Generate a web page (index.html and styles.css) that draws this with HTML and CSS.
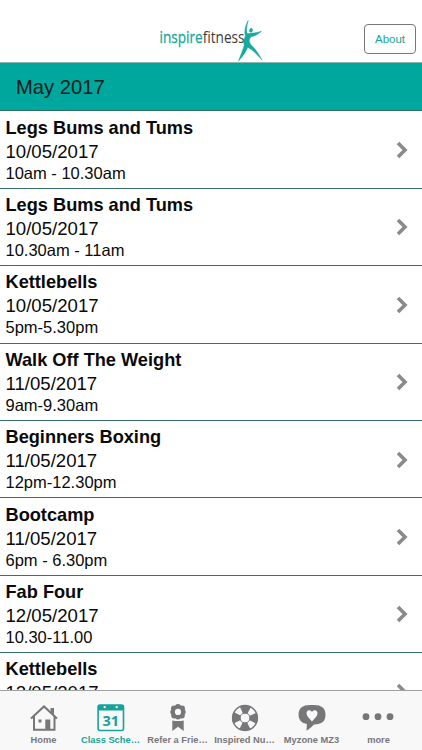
FILE: index.html
```html
<!DOCTYPE html>
<html lang="en">
<head>
    <meta charset="UTF-8">
    <meta name="viewport" content="width=device-width, initial-scale=1.0">
    <title>Inspire Fitness - Class Schedule</title>
    <link rel="stylesheet" href="styles.css">
</head>
<body>
    <header class="header">
        <svg class="logo" width="106" height="48" viewBox="0 0 106 48" role="img" aria-label="inspirefitness">
            <text class="logo-text" x="-1.5" y="27" textLength="85" lengthAdjust="spacingAndGlyphs"><tspan class="logo-inspire">inspire</tspan><tspan class="logo-fitness">fitness</tspan></text>
            <g fill="#16a99f" stroke="#16a99f" stroke-width="0.5">
                <ellipse cx="90" cy="14.3" rx="1.7" ry="2.2" stroke="none" transform="rotate(20 90 14.3)"/>
                <path d="M87.2 4.5Q84.6 13 86.2 17.8Q89 17.3 92 17Q97 16.6 100.5 15.3Q96 19.8 89.8 20.8Q86.8 24.5 89.6 28.4Q95 33 101 44Q93 34.5 86.8 31.2Q84.5 37.5 77.5 45Q81 36 83.2 29.8Q82 24 84.4 20Q82.4 13.5 87.2 4.5Z"/>
            </g>
        </svg>
        <button class="about">About</button>
    </header>

    <h1 class="month">May 2017</h1>

    <main class="classes">
        <div class="class">
            <div>
                <h2>Legs Bums and Tums</h2>
                <p class="date">10/05/2017</p>
                <p class="time">10am - 10.30am</p>
            </div>
            <svg class="arrow" viewBox="0 0 12 18"><path d="M2 2l7 7-7 7"/></svg>
        </div>
        <div class="class">
            <div>
                <h2>Legs Bums and Tums</h2>
                <p class="date">10/05/2017</p>
                <p class="time">10.30am - 11am</p>
            </div>
            <svg class="arrow" viewBox="0 0 12 18"><path d="M2 2l7 7-7 7"/></svg>
        </div>
        <div class="class">
            <div>
                <h2>Kettlebells</h2>
                <p class="date">10/05/2017</p>
                <p class="time">5pm-5.30pm</p>
            </div>
            <svg class="arrow" viewBox="0 0 12 18"><path d="M2 2l7 7-7 7"/></svg>
        </div>
        <div class="class">
            <div>
                <h2>Walk Off The Weight</h2>
                <p class="date">11/05/2017</p>
                <p class="time">9am-9.30am</p>
            </div>
            <svg class="arrow" viewBox="0 0 12 18"><path d="M2 2l7 7-7 7"/></svg>
        </div>
        <div class="class">
            <div>
                <h2>Beginners Boxing</h2>
                <p class="date">11/05/2017</p>
                <p class="time">12pm-12.30pm</p>
            </div>
            <svg class="arrow" viewBox="0 0 12 18"><path d="M2 2l7 7-7 7"/></svg>
        </div>
        <div class="class">
            <div>
                <h2>Bootcamp</h2>
                <p class="date">11/05/2017</p>
                <p class="time">6pm - 6.30pm</p>
            </div>
            <svg class="arrow" viewBox="0 0 12 18"><path d="M2 2l7 7-7 7"/></svg>
        </div>
        <div class="class">
            <div>
                <h2>Fab Four</h2>
                <p class="date">12/05/2017</p>
                <p class="time">10.30-11.00</p>
            </div>
            <svg class="arrow" viewBox="0 0 12 18"><path d="M2 2l7 7-7 7"/></svg>
        </div>
        <div class="class">
            <div>
                <h2>Kettlebells</h2>
                <p class="date">12/05/2017</p>
            </div>
            <svg class="arrow" viewBox="0 0 12 18"><path d="M2 2l7 7-7 7"/></svg>
        </div>
    </main>

    <nav class="tabs">
        <a class="tab">
            <svg viewBox="0 0 30 30">
                <path fill="none" stroke="currentColor" stroke-width="2" d="M2 15.6L15 3.4l13 12.2M5 13.5v13.3h20.5V13.5"/>
                <path fill="currentColor" d="M21.5 5h3.5v6.5l-3.5-3.2zM16.3 16.5h5V27h-5zM9.5 16.5h3v3h-3z"/>
            </svg>
            <span>Home</span>
        </a>
        <a class="tab active">
            <svg viewBox="0 0 30 30">
                <rect x="2.1" y="2.1" width="25.4" height="25.4" rx="2" fill="none" stroke="currentColor" stroke-width="1.6"/>
                <path fill="currentColor" d="M2 2h26v5.5H2z"/>
                <circle cx="8.7" cy="4.1" r="1.2" fill="#f8f8f8"/>
                <circle cx="20.7" cy="4.1" r="1.2" fill="#f8f8f8"/>
                <text class="day" x="14.8" y="22.5" text-anchor="middle">31</text>
            </svg>
            <span>Class Sche…</span>
        </a>
        <a class="tab">
            <svg viewBox="0 0 30 30">
                <g fill="currentColor">
                    <circle cx="15" cy="4" r="3"/><circle cx="19" cy="5.6" r="3"/>
                    <circle cx="20" cy="9" r="2.7"/><circle cx="18.8" cy="12.5" r="3"/>
                    <circle cx="15" cy="13.5" r="3"/><circle cx="11.2" cy="12.5" r="3"/>
                    <circle cx="10" cy="9" r="2.7"/><circle cx="11" cy="5.6" r="3"/>
                    <path d="M9.3 17.4q5.7 1.4 11.4 0V28L15 23.7 9.3 28z"/>
                </g>
                <circle cx="15" cy="8.9" r="3.1" fill="#f8f8f8"/>
            </svg>
            <span>Refer a Frie…</span>
        </a>
        <a class="tab">
            <svg viewBox="0 0 30 30">
                <circle cx="15" cy="15" r="8.7" fill="none" stroke="currentColor" stroke-width="8.2" stroke-dasharray="8 5.666" stroke-dashoffset="4"/>
                <circle cx="15" cy="15" r="12.4" fill="none" stroke="currentColor" stroke-width="1.5"/>
                <circle cx="15" cy="15" r="5" fill="none" stroke="currentColor" stroke-width="1"/>
            </svg>
            <span>Inspired Nu…</span>
        </a>
        <a class="tab">
            <svg viewBox="0 0 30 30">
                <path fill="currentColor" d="M13 2h4q11.5 0 11.5 9.8T17 21.5q-3.5 3.8-7.5 6.3l.4-6.7Q1.5 19.6 1.5 11.8 1.5 2 13 2z"/>
                <path fill="#f8f8f8" d="M15 18.5C11.8 15 9.5 13 9.5 10.3c0-3.8 4-4 5.5-1.4 1.5-2.6 5.5-2.4 5.5 1.4 0 2.7-2.3 4.7-5.5 8.2z"/>
            </svg>
            <span>Myzone MZ3</span>
        </a>
        <a class="tab">
            <svg class="dots" viewBox="0 0 34 30">
                <g fill="currentColor">
                    <circle cx="4" cy="13.7" r="3.4"/>
                    <circle cx="16" cy="13.7" r="3.4"/>
                    <circle cx="28" cy="13.7" r="3.4"/>
                </g>
            </svg>
            <span>more</span>
        </a>
    </nav>
</body>
</html>
```

FILE: styles.css
```css
* {
    box-sizing: border-box;
}
body {
    display: flex;
    flex-direction: column;
    height: 750px;
    margin: 0;
    overflow: hidden;
    background: white;
    color: #0a0a0a;
    font-family: "Liberation Sans", Arial, sans-serif;
}
h1, h2, p {
    margin: 0;
}

.header {
    display: grid;
    grid-template-columns: 1fr 106px 1fr;
    height: 62px;
    flex: none;
    padding: 16px 6px 0 0;
}
.logo {
    grid-column: 2;
    margin-left: 5.5px;
    overflow: visible;
}
.logo-text {
    font-family: "Open Sans", sans-serif;
    font-size: 16px;
}
.logo-inspire {
    fill: #16a99f;
    stroke: #16a99f;
    stroke-width: 0.3;
}
.logo-fitness {
    fill: #3c3c3c;
}
.about {
    justify-self: end;
    width: 52px;
    height: 30px;
    margin-top: 8px;
    padding: 0;
    border: 1px solid #77777b;
    border-radius: 4px;
    background: white;
    color: #16a39a;
    font: 11.5px "Liberation Sans", Arial, sans-serif;
}

.month {
    height: 49.4px;
    flex: none;
    padding-left: 16px;
    border-top: 1px solid #8fb5b2;
    border-bottom: 1px solid #2d6c6a;
    background: #00a79d;
    color: #10201f;
    font-size: 20.2px;
    font-weight: normal;
    line-height: 48px;
}

.classes {
    flex: 1;
    min-height: 0;
    overflow: hidden;
}
.class {
    display: flex;
    justify-content: space-between;
    align-items: center;
    height: 77.4px;
    padding: 1px 14px 0 5.5px;
    border-bottom: 1px solid #3a706e;
}
.class h2 {
    font-size: 18.2px;
    line-height: 23px;
}
.date {
    font-size: 18.6px;
    line-height: 23px;
}
.time {
    font-size: 16.5px;
    line-height: 21px;
}
.class:last-child {
    align-items: flex-start;
    padding-top: 5px;
}
.class:last-child .arrow {
    margin-top: 25px;
}
.arrow {
    width: 12px;
    height: 18px;
    fill: none;
    stroke: #8a8a8a;
    stroke-width: 3.6;
}

.tabs {
    display: grid;
    grid-template-columns: repeat(6, 1fr);
    height: 60px;
    flex: none;
    padding: 0 10px;
    border-top: 1px solid #a0a0a0;
    background: #f8f8f8;
}
.tab {
    display: flex;
    flex-direction: column;
    align-items: center;
    padding-top: 12px;
    color: #77777a;
    font-size: 9.3px;
    font-weight: bold;
    line-height: 12px;
    white-space: nowrap;
}
.tab svg {
    width: 30px;
    height: 30px;
    margin-bottom: 1px;
}
.tab .dots {
    width: 34px;
}
.tab.active {
    color: #16a39a;
}
.day {
    fill: currentColor;
    font: bold 14.5px "Open Sans", sans-serif;
}
```
